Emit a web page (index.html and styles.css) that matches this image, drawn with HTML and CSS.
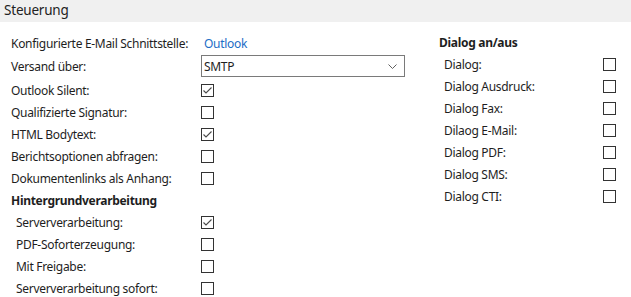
FILE: index.html
```html
<!DOCTYPE html>
<html lang="de">
<head>
<meta charset="utf-8">
<title>Steuerung</title>
<link rel="stylesheet" href="styles.css">
</head>
<body>
<div class="header">Steuerung</div>
<div class="content">
  <div class="left">
    <div class="row first">
      <span class="label">Konfigurierte E-Mail Schnittstelle:</span>
      <span class="link">Outlook</span>
    </div>
    <div class="row select-row">
      <span class="label">Versand über:</span>
      <div class="select">
        <span>SMTP</span>
        <svg class="chev" width="9" height="5" viewBox="0 0 9 5"><path d="M0.5 0.5 L4.5 4.5 L8.5 0.5" fill="none" stroke="#606060" stroke-width="1"/></svg>
      </div>
    </div>
    <div class="row"><span class="label">Outlook Silent:</span><span class="cb checked"><svg width="11" height="11" viewBox="0 0 11 11"><path d="M1.5 5.5 L4 8 L9.5 2.5" fill="none" stroke="#4a4a4a" stroke-width="1.1"/></svg></span></div>
    <div class="row"><span class="label">Qualifizierte Signatur:</span><span class="cb"></span></div>
    <div class="row"><span class="label">HTML Bodytext:</span><span class="cb checked"><svg width="11" height="11" viewBox="0 0 11 11"><path d="M1.5 5.5 L4 8 L9.5 2.5" fill="none" stroke="#4a4a4a" stroke-width="1.1"/></svg></span></div>
    <div class="row"><span class="label">Berichtsoptionen abfragen:</span><span class="cb"></span></div>
    <div class="row"><span class="label">Dokumentenlinks als Anhang:</span><span class="cb"></span></div>
    <div class="row heading-row"><span class="heading">Hintergrundverarbeitung</span></div>
    <div class="row sub"><span class="label">Serververarbeitung:</span><span class="cb checked"><svg width="11" height="11" viewBox="0 0 11 11"><path d="M1.5 5.5 L4 8 L9.5 2.5" fill="none" stroke="#4a4a4a" stroke-width="1.1"/></svg></span></div>
    <div class="row sub"><span class="label">PDF-Soforterzeugung:</span><span class="cb"></span></div>
    <div class="row sub"><span class="label">Mit Freigabe:</span><span class="cb"></span></div>
    <div class="row sub"><span class="label">Serververarbeitung sofort:</span><span class="cb"></span></div>
  </div>
  <div class="right">
    <div class="rheading">Dialog an/aus</div>
    <div class="rrow"><span class="label">Dialog:</span><span class="cb"></span></div>
    <div class="rrow"><span class="label">Dialog Ausdruck:</span><span class="cb"></span></div>
    <div class="rrow"><span class="label">Dialog Fax:</span><span class="cb"></span></div>
    <div class="rrow"><span class="label">Dilaog E-Mail:</span><span class="cb"></span></div>
    <div class="rrow"><span class="label">Dialog PDF:</span><span class="cb"></span></div>
    <div class="rrow"><span class="label">Dialog SMS:</span><span class="cb"></span></div>
    <div class="rrow"><span class="label">Dialog CTI:</span><span class="cb"></span></div>
  </div>
</div>
</body>
</html>
```

FILE: styles.css
```css
html, body {
  margin: 0;
  padding: 0;
  background: #ffffff;
}
body {
  font-family: "Noto Sans", "Open Sans", sans-serif;
  font-size: 12px;
  letter-spacing: -0.3px;
  color: #1e1e1e;
  width: 631px;
  height: 297px;
  overflow: hidden;
}
.header {
  height: 22px;
  line-height: 21px;
  background: #f0f0f0;
  padding-left: 4px;
  font-size: 13.5px;
  letter-spacing: -0.2px;
  color: #222;
}
.content {
  display: flex;
  padding: 10px 0 0 11px;
}
.left {
  width: 394px;
  display: flex;
  flex-direction: column;
}
.row {
  display: grid;
  grid-template-columns: 190px 1fr;
  align-items: center;
  height: 22px;
}
.row.select-row {
  height: 25px;
}
.row.heading-row {
  height: 22px;
}
.row.sub .label {
  padding-left: 5px;
}
.heading, .rheading {
  font-weight: bold;
}
.link {
  color: #1c6dc6;
  padding-left: 3px;
}
.select {
  box-sizing: border-box;
  height: 22px;
  border: 1px solid #7a7a7a;
  display: flex;
  align-items: center;
  justify-content: space-between;
  padding: 0 7px 0 2px;
  margin-top: -1px;
}
.chev {
  display: block;
}
.cb {
  box-sizing: border-box;
  width: 13px;
  height: 13px;
  border: 1px solid #333333;
  background: #fff;
  display: flex;
  align-items: center;
  justify-content: center;
}
.cb svg {
  display: block;
}
.right {
  margin-left: 34px;
  width: 177px;
  display: flex;
  flex-direction: column;
}
.rheading {
  height: 21px;
  line-height: 22px;
}
.rrow {
  display: grid;
  grid-template-columns: 164px 13px;
  align-items: center;
  height: 22px;
}
.rrow .label {
  padding-left: 5px;
}
```
